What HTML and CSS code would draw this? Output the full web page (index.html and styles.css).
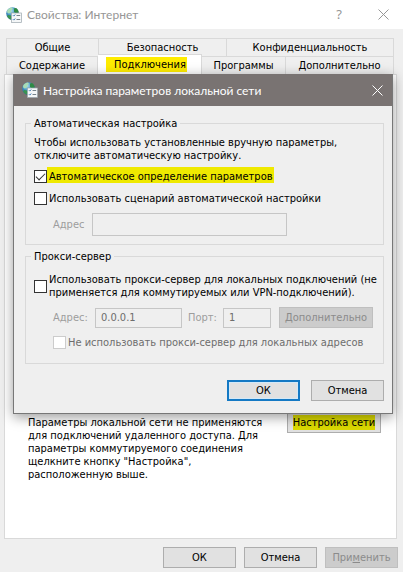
FILE: index.html
```html
<!DOCTYPE html>
<html lang="ru">
<head>
<meta charset="utf-8">
<title>Свойства: Интернет</title>
<link rel="stylesheet" href="styles.css">
</head>
<body>
<svg class="defs" aria-hidden="true">
  <defs>
    <radialGradient id="sea" cx="40%" cy="30%" r="75%">
      <stop offset="0" stop-color="#a5dcf0"/>
      <stop offset="0.5" stop-color="#3f8fc0"/>
      <stop offset="1" stop-color="#1b4b80"/>
    </radialGradient>
    <symbol id="globe" viewBox="0 0 16 16">
      <circle cx="6.5" cy="6.5" r="6.3" fill="url(#sea)"/>
      <path d="M1 4C2 1.500 4 .5 6 .4L7 2 5 3.500 5.500 5 3 6.500 1.500 6z" fill="#a9dcb4"/>
      <path d="M8 1.500l2-.4c1.500 1 2.400 2.500 2.700 4.400L10 6.500 8 5z" fill="#2f8a45"/>
      <path d="M2 8l3 .5L6 11l-.5 1.600C3.500 12.200 2 11 1.200 9.500z" fill="#3a9450"/>
      <rect x="5.500" y="6" width="10" height="9.500" fill="#f5f7f8" stroke="#9aa5ad" stroke-width=".7"/>
      <path d="M7 8.300l.8.800L9.200 7.500M7 12.300l.8.800 1.400-1.600" fill="none" stroke="#3c78b4"/>
      <path d="M10.500 8.500h3.700M10.500 12.500h3.700" stroke="#76828a"/>
    </symbol>
  </defs>
</svg>
<div class="window">
  <header class="titlebar">
    <svg class="app-icon"><use href="#globe"/></svg>
    <h1 class="title">Свойства: Интернет</h1>
    <button class="caption" type="button" aria-label="Справка">?</button>
    <button class="caption" type="button" aria-label="Закрыть"><svg class="cross" viewBox="0 0 11 11"><path d="M.5.5l10 10M10.500.5l-10 10"/></svg></button>
  </header>

  <main class="sheet">
    <nav class="tabs" role="tablist">
      <div class="tab-row tab-row-back">
        <button class="tab" type="button" role="tab">Общие</button>
        <button class="tab" type="button" role="tab">Безопасность</button>
        <button class="tab" type="button" role="tab">Конфиденциальность</button>
      </div>
      <div class="tab-row tab-row-front">
        <button class="tab" type="button" role="tab">Содержание</button>
        <button class="tab tab-active" type="button" role="tab" aria-selected="true"><span class="mark">Подключения</span></button>
        <button class="tab" type="button" role="tab">Программы</button>
        <button class="tab" type="button" role="tab">Дополнительно</button>
      </div>
    </nav>
    <section class="page">
      <p class="note">Параметры локальной сети не применяются<br>для подключений удаленного доступа. Для<br>параметры коммутируемого соединения<br>щелкните кнопку "Настройка",<br>расположенную выше.</p>
      <button class="button button-lan" type="button"><span class="mark-lan">Настройка сети</span></button>
    </section>
  </main>

  <footer class="actions">
    <button class="button" type="button">ОК</button>
    <button class="button" type="button">Отмена</button>
    <button class="button" type="button" disabled>При<u>м</u>енить</button>
  </footer>

  <div class="dialog" role="dialog" aria-labelledby="lan-title">
    <header class="dialog-title">
      <svg class="app-icon"><use href="#globe"/></svg>
      <h2 class="title" id="lan-title">Настройка параметров локальной сети</h2>
      <button class="caption" type="button" aria-label="Закрыть"><svg class="cross" viewBox="0 0 11 11"><path d="M.5.5l10 10M10.500.5l-10 10"/></svg></button>
    </header>
    <form class="dialog-body">
      <fieldset class="group">
        <legend>Автоматическая настройка</legend>
        <p class="hint">Чтобы использовать установленные вручную параметры,<br>отключите автоматическую настройку.</p>
        <div class="check check-auto">
          <input type="checkbox" id="auto" checked>
          <label class="check-mark" for="auto">Автоматическое определение параметров</label>
        </div>
        <div class="check">
          <input type="checkbox" id="script">
          <label for="script">Использовать сценарий автоматической настройки</label>
        </div>
        <div class="fields">
          <label class="muted label-script" for="script-url">Адрес</label>
          <input class="field field-script" type="text" id="script-url" disabled>
        </div>
      </fieldset>
      <fieldset class="group group-proxy">
        <legend>Прокси-сервер</legend>
        <div class="check check-proxy">
          <input type="checkbox" id="proxy">
          <label for="proxy">Использовать прокси-сервер для локальных подключений (не<br>применяется для коммутируемых или VPN-подключений).</label>
        </div>
        <div class="fields">
          <label class="muted label-address" for="address">Адрес:</label>
          <input class="field field-address" type="text" id="address" value="0.0.0.1" disabled>
          <label class="muted label-port" for="port">Порт:</label>
          <input class="field field-port" type="text" id="port" value="1" disabled>
          <button class="button button-more" type="button" disabled>Дополнительно</button>
        </div>
        <div class="check check-bypass">
          <input type="checkbox" id="bypass" disabled>
          <label for="bypass">Не использовать прокси-сервер для локальных адресов</label>
        </div>
      </fieldset>
      <div class="dialog-actions">
        <button class="button button-default" type="button">ОК</button>
        <button class="button" type="button">Отмена</button>
      </div>
    </form>
  </div>
</div>
</body>
</html>
```

FILE: styles.css
```css
* { box-sizing: border-box; }

body {
  margin: 0;
  background: #efefef;
  color: #000;
  font: 11px/13px "DejaVu Sans Condensed", "DejaVu Sans", sans-serif;
}

button, input { font: inherit; color: inherit; }
h1, h2, p { margin: 0; }
.defs { position: absolute; width: 0; height: 0; }

.window {
  position: relative;
  display: flex;
  flex-direction: column;
  min-height: 100vh;
}

/* Title bars */
.titlebar, .dialog-title {
  display: flex;
  align-items: center;
}
.titlebar {
  height: 29px;
  padding: 0 6px;
  background: #fff;
  color: #969696;
}
.dialog-title {
  height: 32px;
  padding: 0 1px 0 8px;
  background: #797372;
  color: #fff;
}
.app-icon { flex: none; width: 16px; height: 16px; }
.title {
  flex: 1;
  margin-left: 5px;
  font-family: Lato, sans-serif;
  font-size: 12px;
  font-weight: 400;
  white-space: nowrap;
}
.caption {
  display: flex;
  align-items: center;
  justify-content: center;
  width: 28px;
  height: 28px;
  padding: 0;
  border: 0;
  background: none;
  font-family: "Noto Sans", sans-serif;
  font-size: 13px;
}
.titlebar .caption + .caption { margin-left: 16px; }
.cross {
  width: 11px;
  height: 11px;
  fill: none;
  stroke: currentColor;
}

/* Tabs */
.sheet {
  flex: 1;
  display: flex;
  flex-direction: column;
  padding: 9px 6px 0 4px;
}
.tabs { padding: 0 3px 0 2px; }
.tab-row { display: grid; height: 18px; }
.tab-row-back { grid-template-columns: 93fr 128fr 167fr; }
.tab-row-front { grid-template-columns: 92fr 104fr 84fr 108fr; }
.tab {
  padding: 0;
  border: 1px solid #d9d9d9;
  border-width: 1px 1px 0 0;
  background: #efefef;
  white-space: nowrap;
}
.tab:first-child { border-left-width: 1px; }
.tab-active {
  margin: -2px 0 -1px;
  padding: 0 6px 2px 0;
  background: #fff;
  z-index: 1;
}
.mark {
  padding: 1px 1px 1px 8px;
  background: #ffec00;
}

.page {
  flex: 1;
  display: flex;
  align-items: flex-start;
  justify-content: space-between;
  padding: 341px 15px 0 23px;
  border: 1px solid #d9d9d9;
  background: #fff;
}
.note { white-space: nowrap; }

/* Buttons */
.button {
  width: 73px;
  height: 21px;
  padding: 0;
  border: 1px solid #adadad;
  background: #e1e1e1;
  white-space: nowrap;
}
.button:disabled {
  border-color: #bfbfbf;
  background: #ccc;
  color: #8b8b8b;
}
.button-default {
  border: 2px solid #1479c4;
  box-shadow: inset 0 0 0 1px #d3e9f8;
}
.button-lan { width: 94px; margin-top: -4px; }
.mark-lan { padding: 1px 0; background: #dbd900; }
.button-more { width: 94px; margin-left: 8px; }

.actions {
  display: flex;
  justify-content: flex-end;
  gap: 8px;
  padding: 8px 5px 4px;
}

/* Dialog over the sheet */
.dialog {
  position: absolute;
  z-index: 2;
  top: 74px;
  left: 13px;
  right: 10px;
  border: 1px solid #777;
  border-top: 0;
  background: #efefef;
  box-shadow: 0 3px 12px rgba(0, 0, 0, .4);
}
.dialog-body { padding: 11px 8px 12px 11px; }

.group {
  min-width: 0;
  margin: 0 0 5px;
  padding: 6px 8px 8px;
  border: 1px solid #d9d9d9;
}
.group-proxy { padding: 10px 8px 14px; margin-bottom: 16px; }
legend { margin-left: -3px; padding: 0 3px; }

.check {
  display: flex;
  align-items: center;
  gap: 2px;
  margin-top: 9px;
  white-space: nowrap;
}
.hint { white-space: nowrap; }
.check input {
  appearance: none;
  flex: none;
  width: 13px;
  height: 13px;
  margin: 0;
  border: 1px solid #333;
  background: #fff;
}
.check input:disabled { border-color: #ccc; }
.check input:disabled + label { color: #6d6d6d; }
.check input:checked::before {
  content: "";
  display: block;
  width: 8px;
  height: 4px;
  margin: 2px 1px;
  border: solid #333;
  border-width: 0 0 1px 1px;
  transform: rotate(-45deg);
}
.check-auto { align-items: flex-end; margin-top: 5px; }
.check-mark {
  padding: 3px 1px 0 2px;
  margin-left: -2px;
  background: #efe900;
}
.check-proxy { margin-top: 0; }
.check-bypass { margin: 8px 0 0 19px; }

.fields {
  display: flex;
  align-items: center;
  margin: 8px 0 0 19px;
}
.muted { color: #9d9d9d; }
.label-script { width: 39px; }
.label-address { width: 42px; }
.label-port { width: 35px; margin-left: 6px; }
.field {
  height: 20px;
  padding: 0 5px;
  border: 1px solid #c6c6c6;
  background: #efefef;
  color: #6d6d6d;
}
.field-script { width: 195px; height: 23px; }
.field-address { width: 87px; }
.field-port { width: 48px; }

.dialog-actions {
  display: flex;
  justify-content: flex-end;
  gap: 11px;
}
```
